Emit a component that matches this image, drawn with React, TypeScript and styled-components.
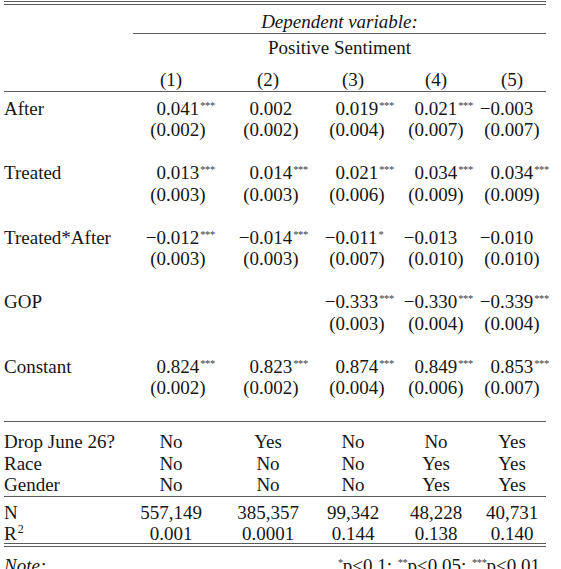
import React from "react";
import styled, { createGlobalStyle } from "styled-components";

const GlobalStyle = createGlobalStyle`
  html, body { margin: 0; padding: 0; background: #ffffff; overflow: hidden; }
  body {
    font-family: "Liberation Serif", "Times New Roman", serif;
    color: #161616;
    font-size: 19px;
  }
`;

const LEFT = 4;
const LABEL_W = 129;
const CENTERS = [171, 268, 353, 436, 512];
// how far the decimal point sits left of each column's centre
const ANCHOR_SHIFT = [5, 9, 8, 12, 12];
const TABLE_W = 542;

// contiguous columns whose middles fall on CENTERS
const COLS: number[] = (() => {
  const out: number[] = [];
  let start = LEFT + LABEL_W;
  CENTERS.forEach((c) => {
    const w = 2 * (c - start);
    out.push(w);
    start += w;
  });
  return out;
})();
const GRID = `${LABEL_W}px ${COLS.map((c) => `${c}px`).join(" ")}`;

const Table = styled.div`
  width: ${TABLE_W}px;
  margin-left: ${LEFT}px;
  padding-top: 1px;
`;

const DoubleRule = styled.div<{ $mt?: number }>`
  margin-top: ${(p) => p.$mt ?? 0}px;
  height: 2px;
  border-top: 1px solid #5a5a5a;
  border-bottom: 1px solid #5a5a5a;
`;

const Rule = styled.div<{ $mt?: number; $indent?: number }>`
  margin-top: ${(p) => p.$mt ?? 0}px;
  margin-left: ${(p) => p.$indent ?? 0}px;
  height: 0;
  border-top: 1px solid #5a5a5a;
`;

const SpanRow = styled.div<{ $mt?: number; $italic?: boolean }>`
  margin-top: ${(p) => p.$mt ?? 0}px;
  margin-left: ${LABEL_W}px;
  height: 22px;
  line-height: 22px;
  text-align: center;
  font-style: ${(p) => (p.$italic ? "italic" : "normal")};
  white-space: nowrap;
`;

const Row = styled.div<{ $mt?: number; $h?: number }>`
  margin-top: ${(p) => p.$mt ?? 0}px;
  display: grid;
  grid-template-columns: ${GRID};
  height: ${(p) => p.$h ?? 21.5}px;
  line-height: 21.5px;
  align-items: center;
`;

const Label = styled.div`
  white-space: nowrap;
`;

const Cell = styled.div`
  display: flex;
  justify-content: center;
  white-space: nowrap;
`;

/* decimal-aligned cell: integer part right-aligned before the anchor, rest after */
const DecCell = styled.div<{ $anchor: number }>`
  display: grid;
  grid-template-columns: ${(p) => p.$anchor}px 1fr;
  white-space: nowrap;
`;

const IntPart = styled.span`
  justify-self: end;
`;

const FracPart = styled.span`
  justify-self: start;
`;

const Stars = styled.span`
  font-size: 10.5px;
  letter-spacing: -0.4px;
  position: relative;
  top: -6px;
  line-height: 0;
  margin-left: 1px;
  color: #3a3a3a;
`;

const Sup = styled.span`
  font-size: 12px;
  position: relative;
  top: -7px;
  line-height: 0;
  margin-left: 1px;
`;

const NoteRow = styled.div<{ $mt?: number }>`
  margin-top: ${(p) => p.$mt ?? 0}px;
  display: flex;
  justify-content: space-between;
  height: 21.5px;
  line-height: 21.5px;
  padding-right: 6px;
  white-space: nowrap;
`;

const NoteLabel = styled.span`
  font-style: italic;
`;

const Blank = styled.div<{ $h?: number }>`
  height: ${(p) => p.$h ?? 21.5}px;
`;

type Val = { v: string; s?: string } | null;

const Num: React.FC<{ val: Val; col: number }> = ({ val, col }) => {
  const anchor = COLS[col] / 2 - ANCHOR_SHIFT[col];
  if (!val) return <DecCell $anchor={anchor} />;
  const i = val.v.indexOf(".");
  return (
    <DecCell $anchor={anchor}>
      <IntPart>{val.v.slice(0, i)}</IntPart>
      <FracPart>
        {val.v.slice(i)}
        {val.s ? <Stars>{val.s}</Stars> : null}
      </FracPart>
    </DecCell>
  );
};

const se = (xs: string[]): Val[] => xs.map((v) => ({ v }));

const coefs: { label: string; est: Val[]; se: Val[] }[] = [
  {
    label: "After",
    est: [
      { v: "0.041", s: "***" },
      { v: "0.002" },
      { v: "0.019", s: "***" },
      { v: "0.021", s: "***" },
      { v: "−0.003" },
    ],
    se: se(["(0.002)", "(0.002)", "(0.004)", "(0.007)", "(0.007)"]),
  },
  {
    label: "Treated",
    est: [
      { v: "0.013", s: "***" },
      { v: "0.014", s: "***" },
      { v: "0.021", s: "***" },
      { v: "0.034", s: "***" },
      { v: "0.034", s: "***" },
    ],
    se: se(["(0.003)", "(0.003)", "(0.006)", "(0.009)", "(0.009)"]),
  },
  {
    label: "Treated*After",
    est: [
      { v: "−0.012", s: "***" },
      { v: "−0.014", s: "***" },
      { v: "−0.011", s: "*" },
      { v: "−0.013" },
      { v: "−0.010" },
    ],
    se: se(["(0.003)", "(0.003)", "(0.007)", "(0.010)", "(0.010)"]),
  },
  {
    label: "GOP",
    est: [null, null, { v: "−0.333", s: "***" }, { v: "−0.330", s: "***" }, { v: "−0.339", s: "***" }],
    se: [null, null, { v: "(0.003)" }, { v: "(0.004)" }, { v: "(0.004)" }],
  },
  {
    label: "Constant",
    est: [
      { v: "0.824", s: "***" },
      { v: "0.823", s: "***" },
      { v: "0.874", s: "***" },
      { v: "0.849", s: "***" },
      { v: "0.853", s: "***" },
    ],
    se: se(["(0.002)", "(0.002)", "(0.004)", "(0.006)", "(0.007)"]),
  },
];

const controls: [string, string[]][] = [
  ["Drop June 26?", ["No", "Yes", "No", "No", "Yes"]],
  ["Race", ["No", "No", "No", "Yes", "Yes"]],
  ["Gender", ["No", "No", "No", "Yes", "Yes"]],
];

const TextRow: React.FC<{ label: React.ReactNode; vals: string[]; mt?: number; h?: number }> = ({
  label,
  vals,
  mt,
  h,
}) => (
  <Row $mt={mt} $h={h}>
    <Label>{label}</Label>
    {vals.map((v, j) => (
      <Cell key={j}>{v}</Cell>
    ))}
  </Row>
);

export default function App() {
  return (
    <>
      <GlobalStyle />
      <Table>
        <DoubleRule />
        <SpanRow $mt={6} $italic>
          Dependent variable:
        </SpanRow>
        <Rule $indent={LABEL_W} />
        <SpanRow $mt={3}>Positive Sentiment</SpanRow>
        <TextRow label="" vals={["(1)", "(2)", "(3)", "(4)", "(5)"]} mt={10} />
        <Rule />
        <Blank $h={6} />
        {coefs.map((c, i) => (
          <React.Fragment key={c.label}>
            {i > 0 ? <Blank /> : null}
            <Row>
              <Label>{c.label}</Label>
              {c.est.map((e, j) => (
                <Num key={j} val={e} col={j} />
              ))}
            </Row>
            <Row>
              <Label />
              {c.se.map((e, j) => (
                <Num key={j} val={e} col={j} />
              ))}
            </Row>
          </React.Fragment>
        ))}
        <Blank />
        <Rule $mt={1} />
        {controls.map(([l, vals], i) => (
          <TextRow key={l} label={l} vals={vals} mt={i === 0 ? 9 : 0} />
        ))}
        <Rule />
        <TextRow label="N" vals={["557,149", "385,357", "99,342", "48,228", "40,731"]} mt={5} />
        <TextRow
          label={
            <>
              R<Sup>2</Sup>
            </>
          }
          vals={["0.001", "0.0001", "0.144", "0.138", "0.140"]}
          h={19.5}
        />
        <DoubleRule />
        <NoteRow $mt={8}>
          <NoteLabel>Note:</NoteLabel>
          <span>
            <Stars>*</Stars>p&lt;0.1; <Stars>**</Stars>p&lt;0.05; <Stars>***</Stars>p&lt;0.01
          </span>
        </NoteRow>
      </Table>
    </>
  );
}
